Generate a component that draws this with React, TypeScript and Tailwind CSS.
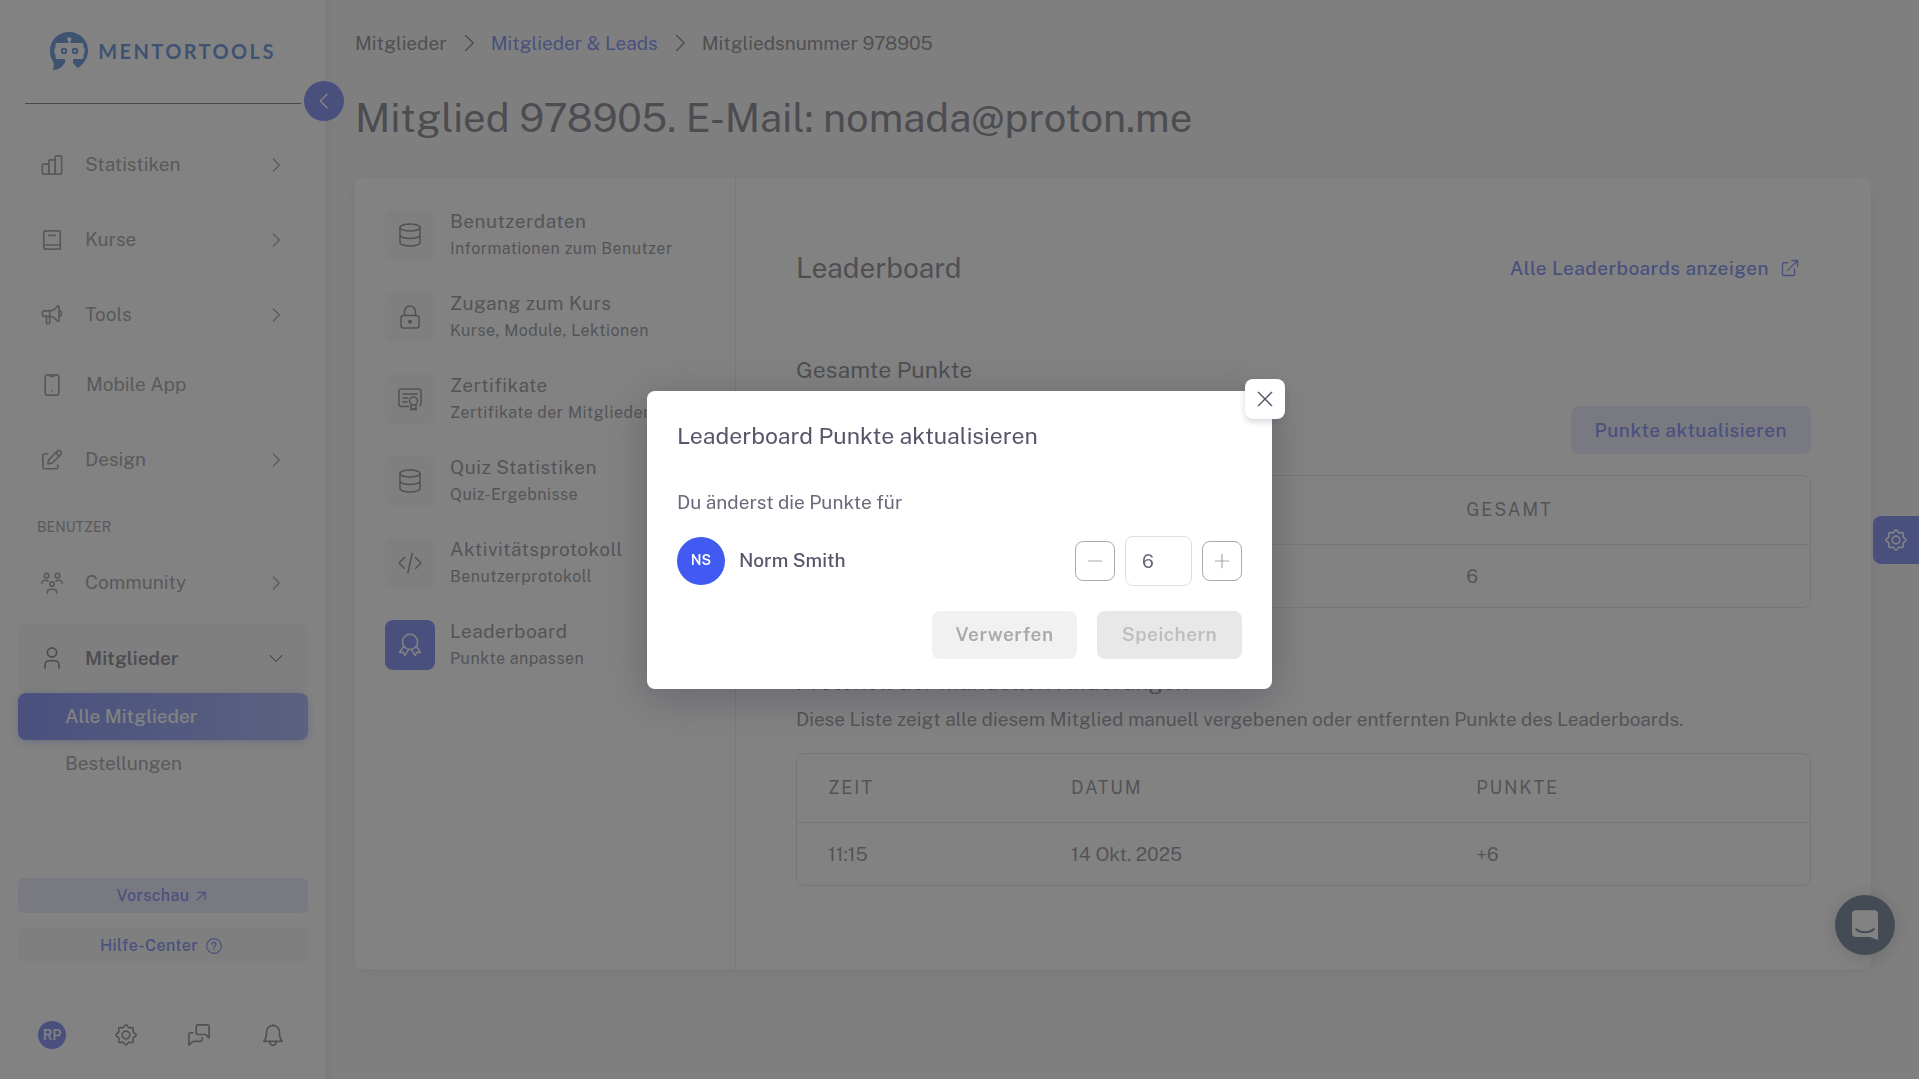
import { useState, type ReactNode } from "react";
import { clsx } from "clsx";

const icons: Record<string, ReactNode> = {
  stats: (
    <>
      <path d="M1.5 12.2c0-.7.5-1.2 1.2-1.2h5.800v11H2.700c-.7 0-1.200-.5-1.200-1.200z" />
      <path d="M8.500 22V7.600c0-.7.5-1.200 1.200-1.200h5.800V22z" />
      <path d="M15.500 22V3.200c0-.7.5-1.200 1.200-1.200h4.600c.7 0 1.200.5 1.200 1.200v17.600c0 .7-.5 1.200-1.200 1.200z" />
    </>
  ),
  book: (
    <>
      <path d="M21 17.500V3.200c0-.7-.5-1.200-1.200-1.200H5.300C4 2 3 3 3 4.300v15C3 20.800 4 22 5.300 22H21v-4.500H5.300C4 17.500 3 18.500 3 19.800" />
      <path d="M8.500 7h7" />
    </>
  ),
  megaphone: (
    <>
      <path d="M9.500 7.500H3.200c-.9 0-1.700.8-1.700 1.700v2.600c0 .9.800 1.700 1.700 1.700h6.300z" />
      <path d="M9.500 7.500c3.500 0 6.500-2.500 8.500-5 .8-.8 1.800-.5 1.800.7v14.600c0 1.200-1 1.500-1.800.7-2-2.500-5-5-8.500-5" />
      <path d="M19.800 7.800c1.500.2 2.700 1.300 2.700 2.700s-1.200 2.500-2.700 2.700" />
      <path d="M6 13.500v6.700c0 .7.500 1.300 1.200 1.300h1.100c.7 0 1.200-.6 1.200-1.300v-6.700" />
    </>
  ),
  phone: (
    <>
      <rect x="4.500" y="1" width="15" height="22" rx="2.500" />
      <path d="M9 1l.8 1.200c.2.300.5.500.8.500h2.800c.3 0 .6-.2.800-.5L15 1" />
      <path d="M12 18.200v.1" />
    </>
  ),
  edit: (
    <>
      <path d="M7.500 5.500H3.700c-.9 0-1.700.8-1.700 1.700v12.600c0 .9.800 1.700 1.700 1.700h13.100c.9 0 1.700-.8 1.700-1.700v-2.300" />
      <path d="M12.300 15.300l-4.800 1 1-4.800 9-9c1-1 2.700-1 3.800 0s1 2.800 0 3.800z" />
      <path d="M16 4l4 4" />
    </>
  ),
  community: (
    <>
      <circle cx="6" cy="4" r="2.500" />
      <circle cx="18" cy="4" r="2.500" />
      <circle cx="12" cy="13.200" r="2.500" />
      <path d="M1 12.500c0-2.300 1.800-3.500 3.800-3.500 1.100 0 2 .3 2.700.8M23 12.500c0-2.300-1.800-3.500-3.800-3.500-1.100 0-2 .3-2.700.8M7 23v-1c0-1.700 1.300-3 3-3h4c1.700 0 3 1.300 3 3v1" />
    </>
  ),
  user: (
    <>
      <circle cx="12" cy="6" r="5" />
      <path d="M4.500 23v-3.500c0-2.500 2-4.500 4.500-4.500h6c2.500 0 4.500 2 4.500 4.500V23" />
    </>
  ),
  database: (
    <>
      <ellipse cx="12" cy="4.500" rx="10" ry="3.500" />
      <path d="M2 4.500v15C2 21.400 6.500 23 12 23s10-1.600 10-3.500v-15M2 12c0 1.900 4.500 3.500 10 3.500s10-1.600 10-3.500" />
    </>
  ),
  lock: (
    <>
      <rect x="3" y="10.500" width="18" height="12.500" rx="2.500" />
      <path d="M6.500 10.500v-4a5.500 5.500 0 0 1 11 0v4" />
      <circle cx="12" cy="16.700" r="1.300" fill="currentColor" />
    </>
  ),
  certificate: (
    <>
      <path d="M10.500 19.500H3.200c-1.200 0-2.200-1-2.200-2.200V4.200C1 3 2 2 3.200 2h17.600C22 2 23 3 23 4.200v12.600c0 1-.5 1.700-1.300 2" />
      <path d="M5 7h14M5 11h5M5 15h4" />
      <circle cx="15.500" cy="14" r="4" />
      <path d="M13 17.500V23l2.500-1.500L18 23v-5.500" />
    </>
  ),
  code: <path d="M6.500 6.500L1 12l5.500 5.500M17.500 6.500L23 12l-5.500 5.500M14.200 2.500L9.800 22" />,
  award: (
    <>
      <circle cx="12" cy="8.800" r="7.600" />
      <path d="M5.500 13.500L1.500 19.500l3.700-.3 1.700 3.300 3.800-6.200M18.500 13.500l4 6-3.700-.3-1.700 3.300-3.800-6.200" />
    </>
  ),
  gear: (
    <>
      <circle cx="12" cy="12" r="4.200" />
      <path d="M12 1c1.500 0 1.900 2.600 3.300 3.100 1.300.6 3.400-1 4.400 0s-.5 3.100.1 4.500c.5 1.300 3.200 1.800 3.200 3.400s-2.700 2-3.200 3.400c-.6 1.300 1 3.400-.1 4.500s-3.100-.6-4.400 0c-1.400.5-1.800 3.100-3.300 3.100s-1.900-2.600-3.300-3.100c-1.300-.6-3.400 1-4.400 0s.5-3.200-.1-4.500C3.700 14 1 13.500 1 12s2.700-2 3.200-3.400c.6-1.400-1-3.400.1-4.500s3.100.6 4.400 0C10.100 3.600 10.500 1 12 1z" />
    </>
  ),
  chat: (
    <>
      <path d="M10.700 1h10.600c.9 0 1.700.8 1.700 1.700v12.500l-3.700-3.700h-8.600c-.9 0-1.700-.8-1.700-1.700V2.700C9 1.800 9.800 1 10.700 1z" />
      <path d="M5.500 9.500H2.700C1.800 9.500 1 10.300 1 11.200V23l4.500-4h8.300c.9 0 1.700-.8 1.700-1.700V15" />
    </>
  ),
  bell: (
    <>
      <path d="M12 1.500c4 0 7 3.200 7 7 0 6.500 1.500 9 3 10.500H2c1.500-1.500 3-4 3-10.500 0-3.800 3-7 7-7zM12 1.500V.8" />
      <path d="M8.500 19c0 2.200 1.500 4 3.500 4s3.500-1.800 3.500-4" />
    </>
  ),
  external: (
    <>
      <path d="M9 5H3.500C2.700 5 2 5.700 2 6.500v14c0 .8.700 1.500 1.500 1.500h13c.8 0 1.500-.7 1.500-1.500V13" />
      <path d="M8.500 15.500L22 2M14.500 2H22v7.500" />
    </>
  ),
  arrow: <path d="M2 22L22 3M5 3h17v17" />,
  help: (
    <>
      <circle cx="12" cy="12" r="11" />
      <path d="M9 9.500C9 7.800 10.300 6.500 12 6.500s3 1.300 3 3c0 2.300-3 2.200-3 4.500M12 17v.3" />
    </>
  ),
  right: <path d="M8 3l9 9-9 9" />,
  left: <path d="M16 3l-9 9 9 9" />,
  down: <path d="M3 8l9 9 9-9" />,
  close: <path d="M2 2l20 20M22 2L2 22" />,
  minus: <path d="M2 12h20" />,
  plus: <path d="M2 12h20M12 2v20" />,
};

function Icon({ name, className = "size-6", stroke = 1.8 }: { name: string; className?: string; stroke?: number }) {
  return (
    <svg
      viewBox="0 0 24 24"
      fill="none"
      stroke="currentColor"
      strokeWidth={stroke}
      strokeLinecap="round"
      strokeLinejoin="round"
      aria-hidden="true"
      className={clsx("shrink-0 overflow-visible", className)}
    >
      {icons[name]}
    </svg>
  );
}

function Logo() {
  return (
    <a href="#" className="flex items-center justify-center gap-2.5 text-[#1c60c8]">
      <svg viewBox="0 0 38 38" className="size-[38px]" aria-hidden="true">
        <path
          fill="currentColor"
          fillRule="evenodd"
          d="M19 0c10.500 0 19 8 19 18.500 0 7-4 14-10.300 17.500L23 31v-4h9c1 0 1.500-.6 1.500-1.500v-3.300l1-.4v-5.600l-1-.4v-3.300c0-.9-.6-1.500-1.500-1.500H20.300V9a2 2 0 1 0-2 0v2H7c-.9 0-1.500.6-1.500 1.500v3.300l-1 .4v5.600l1 .4v3.300c0 .9.500 1.500 1.500 1.500h8v3.500C12.500 35 8.500 38 2.500 38c1.700-3 1.600-6 .8-8C1 26.500 0 22.500 0 18.500 0 8 8.500 0 19 0z"
        />
        <circle cx="14" cy="19" r="2.200" fill="none" stroke="currentColor" strokeWidth="2" />
        <circle cx="25" cy="19" r="2.200" fill="none" stroke="currentColor" strokeWidth="2" />
      </svg>
      <span className="font-['Lato',sans-serif] text-[20px] font-bold tracking-[0.12em]">MENTORTOOLS</span>
    </a>
  );
}

function NavItem({ icon, label }: { icon: string; label: string }) {
  return (
    <a href="#" className="flex h-[75px] items-center pr-6 pl-[23px]">
      <Icon name={icon} className="size-[22px]" />
      <span className="ml-[22px] flex-1">{label}</span>
      <Icon name="right" className="size-4" />
    </a>
  );
}

function Sidebar() {
  return (
    <aside className="relative flex w-[326px] shrink-0 flex-col border-r border-[#f0f0f0] bg-white pr-[17px] pb-[30px] pl-[18px] text-[19px] text-[#75757f] shadow-[2px_0_12px_rgba(60,60,90,0.12)]">
      <div className="mx-[7px] flex h-[104px] items-center justify-center border-b border-[#3c3c48] pb-0.5">
        <Logo />
      </div>
      <button
        type="button"
        aria-label="Menü einklappen"
        className="absolute top-[81px] -right-[19px] flex size-10 items-center justify-center rounded-full bg-[#4359f0] text-white"
      >
        <Icon name="left" className="size-[18px]" stroke={2} />
      </button>

      <nav className="mt-[23px] flex flex-col">
        <NavItem icon="stats" label="Statistiken" />
        <NavItem icon="book" label="Kurse" />
        <NavItem icon="megaphone" label="Tools" />
        <a href="#" className="flex h-[65px] items-center pl-[23px]">
          <Icon name="phone" className="size-[22px]" />
          <span className="ml-[23px]">Mobile App</span>
        </a>
        <div className="pt-[5px]">
          <NavItem icon="edit" label="Design" />
        </div>
        <h2 className="pt-5 pl-[19px] text-[14px] leading-5">BENUTZER</h2>
        <div className="pt-2">
          <NavItem icon="community" label="Community" />
        </div>
        <button
          type="button"
          aria-expanded="true"
          className="mt-[3px] flex h-[70px] items-center rounded-lg bg-[#f5f5f5] pr-6 pl-[23px] text-left text-[#4b4b5a]"
        >
          <Icon name="user" className="size-[22px]" />
          <span className="ml-[22px] flex-1 font-semibold">Mitglieder</span>
          <Icon name="down" className="size-4" />
        </button>
        <a
          href="#"
          className="flex h-[47px] items-center rounded-lg bg-linear-to-r from-[#4359f0] to-[#8090f5] pl-[47px] font-medium text-white shadow-[0_2px_8px_rgba(67,89,240,0.4)]"
        >
          Alle Mitglieder
        </a>
        <a href="#" className="flex h-[47px] items-center pl-[47px]">
          Bestellungen
        </a>
      </nav>

      <div className="mt-auto flex flex-col gap-[15px] text-[16px] font-medium tracking-wide text-[#4359f0]">
        <button type="button" className="flex h-[35px] items-center justify-center gap-1.5 rounded-md bg-[#dfe2fb] pr-1">
          Vorschau
          <Icon name="arrow" className="size-2.5" stroke={3} />
        </button>
        <button type="button" className="flex h-[35px] items-center justify-center gap-2 rounded-md bg-[#f3f3f3] pr-1">
          Hilfe-Center
          <Icon name="help" className="size-4" />
        </button>
      </div>
      <div className="mt-[58px] flex items-center justify-between pr-[21px] pl-5 text-[#5c5c68]">
        <button type="button" className="flex size-7 items-center justify-center rounded-full bg-[#4359f0] text-[14px] font-semibold text-white">
          RP
        </button>
        <button type="button" aria-label="Einstellungen" className="flex size-7 items-center justify-center">
          <Icon name="gear" className="size-[22px]" />
        </button>
        <button type="button" aria-label="Nachrichten" className="flex size-7 items-center justify-center">
          <Icon name="chat" className="size-[22px]" />
        </button>
        <button type="button" aria-label="Benachrichtigungen" className="flex size-7 items-center justify-center">
          <Icon name="bell" className="size-[22px]" />
        </button>
      </div>
    </aside>
  );
}

const tabs = [
  { icon: "database", title: "Benutzerdaten", text: "Informationen zum Benutzer" },
  { icon: "lock", title: "Zugang zum Kurs", text: "Kurse, Module, Lektionen" },
  { icon: "certificate", title: "Zertifikate", text: "Zertifikate der Mitglieder" },
  { icon: "database", title: "Quiz Statistiken", text: "Quiz-Ergebnisse" },
  { icon: "code", title: "Aktivitätsprotokoll", text: "Benutzerprotokoll" },
  { icon: "award", title: "Leaderboard", text: "Punkte anpassen", active: true },
];

function MemberTabs() {
  return (
    <nav className="flex w-[381px] shrink-0 flex-col gap-7 border-r border-[#dcdce2] px-[30px] py-[30px]">
      {tabs.map((tab) => (
        <a key={tab.title} href="#" className="flex items-center gap-[15px]">
          <span
            className={clsx(
              "flex size-[50px] shrink-0 items-center justify-center rounded-lg",
              tab.active ? "bg-[#4359f0] text-white" : "bg-[#f6f6f6] text-[#5c5c68]",
            )}
          >
            <Icon name={tab.icon} stroke={1.5} />
          </span>
          <span className="flex flex-col tracking-wide whitespace-nowrap">
            <span className="text-[19px] leading-[27px]">{tab.title}</span>
            <span className="text-[16px] leading-[27px]">{tab.text}</span>
          </span>
        </a>
      ))}
    </nav>
  );
}

const cell = "px-[31px] text-left font-normal";
const headRow = "h-[68px] border-b border-[#d8d8de] text-[18px] tracking-widest";

function Leaderboard() {
  return (
    <section className="flex min-w-0 flex-1 flex-col px-[60px] pt-[66px] pb-[83px]">
      <div className="flex items-center justify-between">
        <h2 className="text-[28px] leading-12 text-[#55555f]">Leaderboard</h2>
        <a href="#" className="flex items-center gap-3 pr-3 font-medium tracking-wide text-[#4359f0]">
          Alle Leaderboards anzeigen
          <Icon name="external" className="size-[18px]" />
        </a>
      </div>

      <h3 className="mt-[62px] text-[23px] leading-8 text-[#55555f]">Gesamte Punkte</h3>
      <button
        type="button"
        className="mt-5 h-12 self-end rounded-lg bg-[#dfe2fb] px-6 font-medium tracking-wide text-[#4359f0]"
      >
        Punkte aktualisieren
      </button>
      <div className="mt-[21px] rounded-lg border border-[#d8d8de]">
        <table className="w-full table-fixed">
          <thead>
            <tr className={headRow}>
              <th className={clsx(cell, "w-[63%]")}></th>
              <th className={cell}>GESAMT</th>
            </tr>
          </thead>
          <tbody>
            <tr className="h-[63px]">
              <td className={cell}></td>
              <td className={cell}>6</td>
            </tr>
          </tbody>
        </table>
      </div>

      <h3 className="mt-[58px] text-[23px] leading-8 text-[#55555f]">Protokoll der manuellen Änderungen</h3>
      <p className="mt-[7px] leading-7">
        Diese Liste zeigt alle diesem Mitglied manuell vergebenen oder entfernten Punkte des Leaderboards.
      </p>
      <div className="mt-5 rounded-lg border border-[#d8d8de]">
        <table className="w-full table-fixed">
          <thead>
            <tr className={headRow}>
              <th className={clsx(cell, "w-[24%]")}>ZEIT</th>
              <th className={clsx(cell, "w-[40%]")}>DATUM</th>
              <th className={cell}>PUNKTE</th>
            </tr>
          </thead>
          <tbody>
            <tr className="h-[63px]">
              <td className={cell}>11:15</td>
              <td className={cell}>14 Okt. 2025</td>
              <td className={cell}>+6</td>
            </tr>
          </tbody>
        </table>
      </div>
    </section>
  );
}

function PointsDialog() {
  const [points, setPoints] = useState(6);
  const unchanged = points === 6;

  return (
    <div className="fixed inset-0 z-20 flex items-center justify-center bg-[#4d4d4d]/70">
      <div
        role="dialog"
        aria-modal="true"
        aria-labelledby="dialog-title"
        className="relative w-[625px] rounded-lg bg-white p-[30px] text-[19px] text-[#6a697a] shadow-[0_8px_40px_rgba(50,50,75,0.35)]"
      >
        <button
          type="button"
          aria-label="Schließen"
          className="absolute -top-3 -right-[13px] flex size-10 items-center justify-center rounded-lg bg-white text-[#56566a] shadow-[0_3px_6px_rgba(60,60,80,0.2)]"
        >
          <Icon name="close" className="size-4" stroke={2} />
        </button>
        <h2 id="dialog-title" className="text-[23px] leading-[30px] text-[#56566a]">
          Leaderboard Punkte aktualisieren
        </h2>
        <p className="mt-[37px] leading-7">Du änderst die Punkte für</p>
        <div className="mt-5 flex items-center">
          <span className="flex size-12 items-center justify-center rounded-full bg-[#405af2] text-[14px] font-semibold text-white">
            NS
          </span>
          <span className="ml-3.5 flex-1 font-medium text-[#56566a]">Norm Smith</span>
          <button
            type="button"
            aria-label="Weniger Punkte"
            onClick={() => setPoints(points - 1)}
            className="flex size-10 items-center justify-center rounded-lg border border-[#a9a9ad] text-[#a9a9ad]"
          >
            <Icon name="minus" className="size-4" />
          </button>
          <input
            type="text"
            inputMode="numeric"
            aria-label="Punkte"
            value={points}
            onChange={(e) => setPoints(Number(e.target.value) || 0)}
            className="mx-2.5 h-[50px] w-[67px] rounded-lg border border-[#dfdfe3] px-4 outline-none"
          />
          <button
            type="button"
            aria-label="Mehr Punkte"
            onClick={() => setPoints(points + 1)}
            className="flex size-10 items-center justify-center rounded-lg border border-[#a9a9ad] text-[#a9a9ad]"
          >
            <Icon name="plus" className="size-4" />
          </button>
        </div>
        <div className="mt-[25px] flex justify-end gap-5 font-semibold tracking-wide">
          <button type="button" disabled={unchanged} className="h-12 w-[145px] rounded-lg bg-[#f1f1f1] text-[#a9a9ad]">
            Verwerfen
          </button>
          <button type="button" disabled={unchanged} className="h-12 w-[145px] rounded-lg bg-[#e8e8e8] text-[#bebec0]">
            Speichern
          </button>
        </div>
      </div>
    </div>
  );
}

export default function App() {
  return (
    <div className="flex min-h-screen bg-[#f6f6f6] font-['Public_Sans',Inter,'Liberation_Sans',sans-serif] text-[19px] text-[#666670]">
      <Sidebar />
      <main className="flex min-w-0 flex-1 flex-col pr-12 pl-[29px]">
        <nav aria-label="Breadcrumb" className="mt-[29px] flex items-center gap-3 leading-7 text-[#55555f]">
          <a href="#">Mitglieder</a>
          <Icon name="right" className="size-5" />
          <a href="#" className="text-[#4359f0]">Mitglieder &amp; Leads</a>
          <Icon name="right" className="size-5" />
          <span>Mitgliedsnummer 978905</span>
        </nav>
        <h1 className="mt-[35px] text-[40px] leading-[52px] text-[#4b4b5a]">Mitglied 978905. E-Mail: nomada@proton.me</h1>
        <div className="mt-[34px] flex rounded-lg bg-white shadow-[0_4px_20px_rgba(60,60,110,0.12)]">
          <MemberTabs />
          <Leaderboard />
        </div>
      </main>

      <button
        type="button"
        aria-label="Ansicht anpassen"
        className="fixed top-[516px] right-0 flex h-12 w-[46px] items-center justify-center rounded-l-lg bg-[#4359f0] text-white"
      >
        <Icon name="gear" className="size-[22px]" />
      </button>
      <button
        type="button"
        aria-label="Chat öffnen"
        className="fixed right-6 bottom-[124px] flex size-[60px] items-center justify-center rounded-full bg-[#2f4868] text-white shadow-[0_2px_20px_rgba(0,0,0,0.25)]"
      >
        <svg viewBox="0 0 28 32" className="h-[30px] w-[26px]" aria-hidden="true">
          <path
            fill="currentColor"
            d="M28 32s-4.700-1.900-8.500-3.200H3.800C1.700 28.800 0 27 0 25V4C0 1.800 1.700 0 3.800 0h20.400C26.300 0 28 1.800 28 4z"
          />
          <path d="M4.500 20.500c5 4.300 14 4.300 19 0" fill="none" stroke="#2f4868" strokeWidth="2" strokeLinecap="round" />
        </svg>
      </button>
      <PointsDialog />
    </div>
  );
}
